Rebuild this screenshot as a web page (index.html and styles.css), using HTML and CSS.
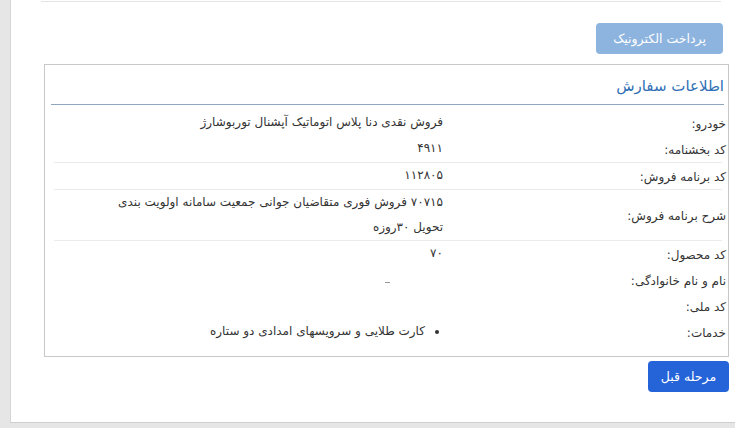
FILE: index.html
```html
<!DOCTYPE html>
<html lang="fa" dir="rtl">
<head>
<meta charset="utf-8">
<link rel="stylesheet" href="styles.css">
</head>
<body>
<div class="page">
  <div class="topline"></div>
  <div class="actions">
    <button class="btn btn-pay" disabled>پرداخت الکترونیک</button>
  </div>
  <div class="card">
    <h3 class="card-title">اطلاعات سفارش</h3>
    <div class="rows">
      <div class="row">
        <div class="label">خودرو:</div>
        <div class="value">فروش نقدی دنا پلاس اتوماتیک آپشنال توربوشارژ</div>
      </div>
      <div class="row">
        <div class="label">کد بخشنامه:</div>
        <div class="value">۴۹۱۱</div>
      </div>
      <div class="row sep">
        <div class="label">کد برنامه فروش:</div>
        <div class="value">۱۱۲۸۰۵</div>
      </div>
      <div class="row sep tall">
        <div class="label">شرح برنامه فروش:</div>
        <div class="value">۷۰۷۱۵ فروش فوری متقاضیان جوانی جمعیت سامانه اولویت بندی تحویل ۳۰روزه</div>
      </div>
      <div class="row sep">
        <div class="label">کد محصول:</div>
        <div class="value">۷۰</div>
      </div>
      <div class="row">
        <div class="label">نام و نام خانوادگی:</div>
        <div class="value blurred"><span class="blur-mark"></span></div>
      </div>
      <div class="row">
        <div class="label">کد ملی:</div>
        <div class="value blurred"></div>
      </div>
      <div class="row">
        <div class="label">خدمات:</div>
        <div class="value">
          <ul class="services">
            <li>کارت طلایی و سرویسهای امدادی دو ستاره</li>
          </ul>
        </div>
      </div>
    </div>
  </div>
  <div class="actions bottom">
    <button class="btn btn-prev">مرحله قبل</button>
  </div>
</div>
</body>
</html>
```
FILE: styles.css
```css
html, body {
  margin: 0;
  padding: 0;
  background: #e6e6e6;
  font-family: "DejaVu Sans", "Noto Sans", sans-serif;
  color: #333;
}
.page {
  margin-right: 0;
  margin-left: 10px;
  background: #fff;
  height: 423px;
  border-left: 1px solid #d6d6d6;
  border-bottom: 1px solid #cfcfcf;
  box-sizing: border-box;
  padding-top: 1px;
}
.topline {
  height: 1px;
  background: #e4e4e4;
  margin: 0 14px 0 30px;
}
.actions {
  display: flex;
  justify-content: flex-start;
  padding: 21px 12px 0 0;
}
.actions.bottom {
  padding: 4px 6px 0 0;
}
.btn {
  font-family: inherit;
  font-size: 12.5px;
  color: #fff;
  border: none;
  border-radius: 4px;
  padding: 0 12px;
  height: 31px;
  line-height: 31px;
}
.btn-pay {
  width: 127px;
  height: 31px;
  background: #8db4de;
}
.btn-prev {
  width: 81px;
  background: #2463d8;
}
.card {
  margin: 10px 6px 0 33px;
  border: 1px solid #c9c9c9;
  padding: 0 6px 8px 6px;
  height: 293px;
  box-sizing: border-box;
}
.card-title {
  margin: 0;
  padding: 12px 0 0 0;
  height: 27px;
  font-size: 15px;
  font-weight: normal;
  color: #2f6fb4;
  border-bottom: 1px solid #8fa6bc;
  margin-right: -2px;
}
.rows {
  padding-top: 5px;
}
.row {
  display: grid;
  grid-template-columns: 279px 335px 1fr;
  align-items: center;
  min-height: 26px;
  font-size: 12px;
}
.row.sep {
  border-top: 1px solid #ececec;
  margin-left: 3px;
}
.row.tall {
  min-height: 50px;
}
.label {
  padding-top: 1px;
  margin-right: -4px;
}
.value {
  line-height: 25px;
  margin-top: -1px;
}
.services {
  margin: 0;
  padding: 0 18px 0 0;
}
.blur-mark {
  display: inline-block;
  width: 5px;
  height: 1px;
  background: #999;
  margin-right: 53px;
}
```
